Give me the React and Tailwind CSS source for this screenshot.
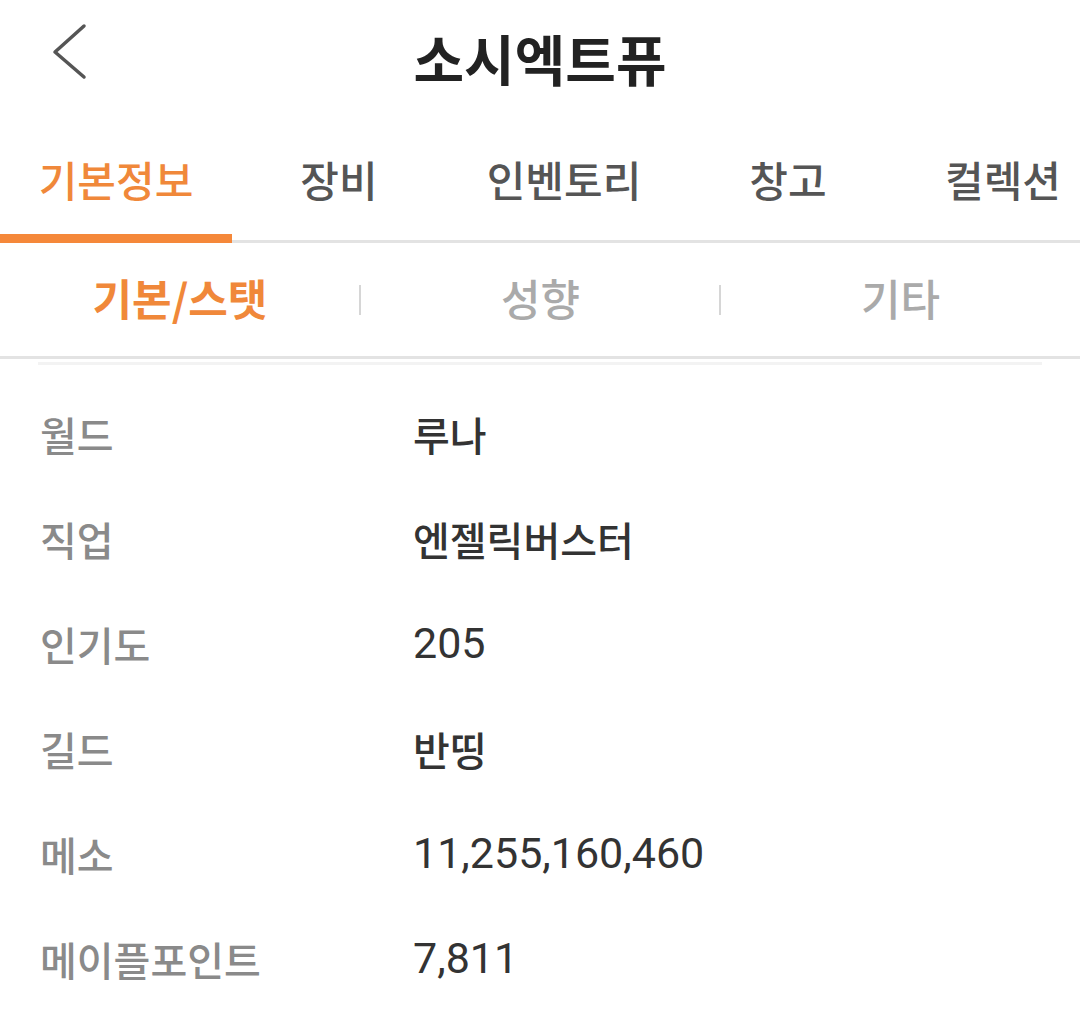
import { useState } from "react";

const KR = { fontFamily: '"Noto Sans CJK KR", "Noto Sans", sans-serif' };

const tabs = [
  { label: "기본정보", w: "w-[232px]" },
  { label: "장비", w: "w-[214px]" },
  { label: "인벤토리", w: "w-[236px]" },
  { label: "창고", w: "w-[212px]" },
  { label: "컬렉션", w: "w-[218px]" },
];

const subTabs = ["기본/스탯", "성향", "기타"];

const rows = [
  { label: "월드", value: "루나" },
  { label: "직업", value: "엔젤릭버스터" },
  { label: "인기도", value: "205", num: true },
  { label: "길드", value: "반띵" },
  { label: "메소", value: "11,255,160,460", num: true },
  { label: "메이플포인트", value: "7,811", num: true },
];

export default function App() {
  const [tab, setTab] = useState(0);
  const [sub, setSub] = useState(0);

  return (
    <div className="w-[1080px] min-h-[1026px] bg-white overflow-hidden" style={KR}>
      {/* header */}
      <header className="relative h-[112px] flex items-center justify-center">
        <button className="absolute left-[48px] top-[22px] w-[42px] h-[60px] flex items-center justify-center">
          <svg width="38" height="58" viewBox="0 0 38 58" fill="none">
            <path d="M34 4 L5 30 L34 55" stroke="#555" strokeWidth="3.5" strokeLinecap="round" strokeLinejoin="round" transform="translate(0 -1)" />
          </svg>
        </button>
        <h1 className="text-[55px] font-bold leading-none text-[#222] pt-[2px]">소시엑트퓨</h1>
      </header>

      {/* main tabs */}
      <nav className="flex h-[131px] overflow-hidden">
        {tabs.map((t, i) => (
          <button
            key={t.label}
            onClick={() => setTab(i)}
            className={`${t.w} shrink-0 flex flex-col`}
          >
            <div className="flex-1 flex items-center justify-center pt-[12px]">
              <span
                className={`text-[42px] leading-none font-medium whitespace-nowrap ${
                  tab === i ? "text-[#f0883a]" : "text-[#555]"
                }`}
              >
                {t.label}
              </span>
            </div>
            <div className="h-[9px] flex flex-col justify-end">
              {tab === i ? (
                <div className="h-[9px] bg-[#f5883a]" />
              ) : (
                <div className="h-[3px] bg-[#e3e3e3]" />
              )}
            </div>
          </button>
        ))}
      </nav>

      {/* sub tabs */}
      <div className="flex h-[116px] items-center border-b-[3px] border-[#e3e3e3]">
        {subTabs.map((s, i) => (
          <div key={s} className="flex-1 flex items-center">
            {i > 0 && <div className="w-[2px] h-[30px] bg-[#d6d6d6] -ml-[1px]" />}
            <button onClick={() => setSub(i)} className="flex-1 flex items-center justify-center pb-[4px]">
              <span
                className={`text-[43px] leading-none ${
                  sub === i ? "text-[#f0883a] font-bold" : "text-[#aaa] font-medium"
                }`}
              >
                {s}
              </span>
            </button>
          </div>
        ))}
      </div>

      <div className="mx-[38px] mt-[3px] h-[3px] bg-[#f3f3f3]" />

      {/* info rows */}
      <div className="pt-[16px]">
        {rows.map((r) => (
          <div key={r.label} className="flex items-center h-[105px] px-[40px]">
            <div className="w-[373px] text-[40px] leading-none font-medium text-[#8a8a8a]">
              {r.label}
            </div>
            {r.num ? (
              <div
                className="text-[43px] leading-none text-[#333]"
                style={{ fontFamily: 'Roboto, "Noto Sans", sans-serif' }}
              >
                {r.value}
              </div>
            ) : (
              <div className="text-[40px] leading-none font-medium text-[#333]">
                {r.value}
              </div>
            )}
          </div>
        ))}
      </div>
    </div>
  );
}
